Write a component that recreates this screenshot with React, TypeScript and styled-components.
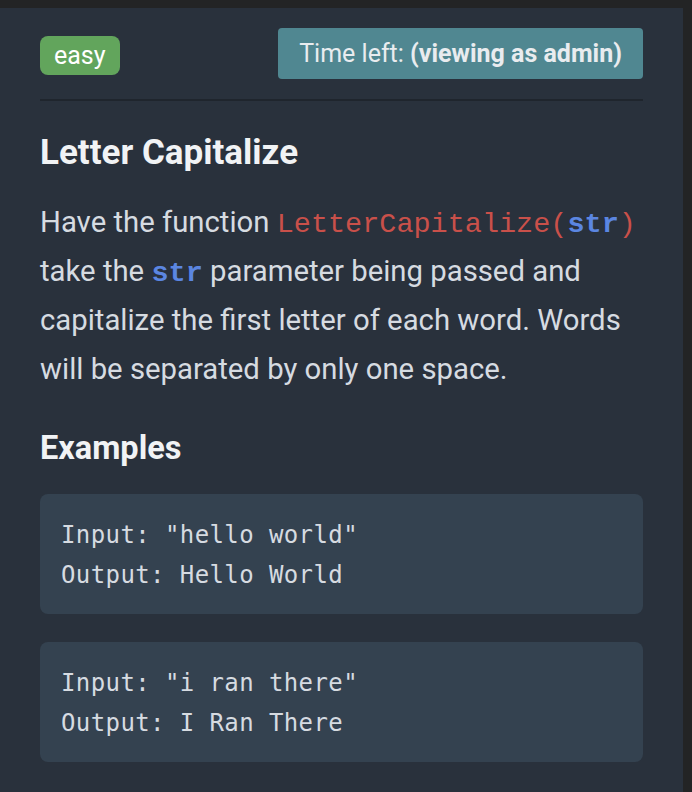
import React from "react";
import styled, { createGlobalStyle } from "styled-components";

const Global = createGlobalStyle`
  html, body { margin: 0; padding: 0; background: #232425; }
  body { font-family: Roboto, "Liberation Sans", sans-serif; }
`;

const Frame = styled.div`
  padding: 8px 9px 0 0;
  background: #232425;
  min-height: 792px;
  box-sizing: border-box;
`;

const Panel = styled.div`
  background: #29313c;
  min-height: 784px;
  box-sizing: border-box;
  padding: 20px 40px 30px 40px;
`;

const Header = styled.div`
  display: flex;
  justify-content: space-between;
  align-items: center;
  padding-bottom: 20px;
  border-bottom: 2px solid #1f252d;
`;

const Badge = styled.span`
  background: #62a55c;
  color: #fff;
  font-size: 25px;
  line-height: 39px;
  padding: 0 14px;
  border-radius: 8px;
  margin-top: 4px;
`;

const TimeButton = styled.div`
  background: #508791;
  color: #e9ecef;
  font-size: 25px;
  line-height: 51px;
  padding: 0 21px;
  border-radius: 4px;
  b { font-weight: 700; }
`;

const Title = styled.h2`
  margin: 34px 0 27px;
  color: #f1f3f5;
  font-size: 35px;
  font-weight: 700;
  line-height: 36px;
`;

const Para = styled.p`
  margin: 0;
  color: #d6dbe1;
  font-size: 29.3px;
  line-height: 49px;
`;

const Code = styled.code<{ $tone: "red" | "blue" }>`
  font-family: "Liberation Mono", monospace;
  font-size: 28.5px;
  line-height: 1;
  color: ${(p) => (p.$tone === "red" ? "#c9504a" : "#5b86e1")};
  font-weight: ${(p) => (p.$tone === "red" ? 400 : 700)};
`;

const SubTitle = styled.h3`
  margin: 36px 0 28px;
  color: #f1f3f5;
  font-size: 32.5px;
  font-weight: 700;
  line-height: 36px;
`;

const Examples = styled.div`
  display: flex;
  flex-direction: column;
  gap: 28px;
`;

const ExampleBox = styled.pre`
  margin: 0;
  background: #344250;
  border-radius: 8px;
  padding: 21px 21px 19px;
  color: #d6dbe1;
  font-family: "DejaVu Sans Mono", monospace;
  font-size: 24px;
  line-height: 40px;
  letter-spacing: 0.4px;
`;

const examples = [
  { input: '"hello world"', output: "Hello World" },
  { input: '"i ran there"', output: "I Ran There" },
];

export default function App() {
  return (
    <Frame>
      <Global />
      <Panel>
        <Header>
          <Badge>easy</Badge>
          <TimeButton>
            Time left: <b>(viewing as admin)</b>
          </TimeButton>
        </Header>
        <Title>Letter Capitalize</Title>
        <Para>
          Have the function <Code $tone="red">LetterCapitalize(</Code>
          <Code $tone="blue">str</Code>
          <Code $tone="red">)</Code> take the <Code $tone="blue">str</Code>{" "}
          parameter being passed and capitalize the first letter of each word.
          Words will be separated by only one space.
        </Para>
        <SubTitle>Examples</SubTitle>
        <Examples>
          {examples.map((e) => (
            <ExampleBox key={e.input}>
              {`Input: ${e.input}\nOutput: ${e.output}`}
            </ExampleBox>
          ))}
        </Examples>
      </Panel>
    </Frame>
  );
}
